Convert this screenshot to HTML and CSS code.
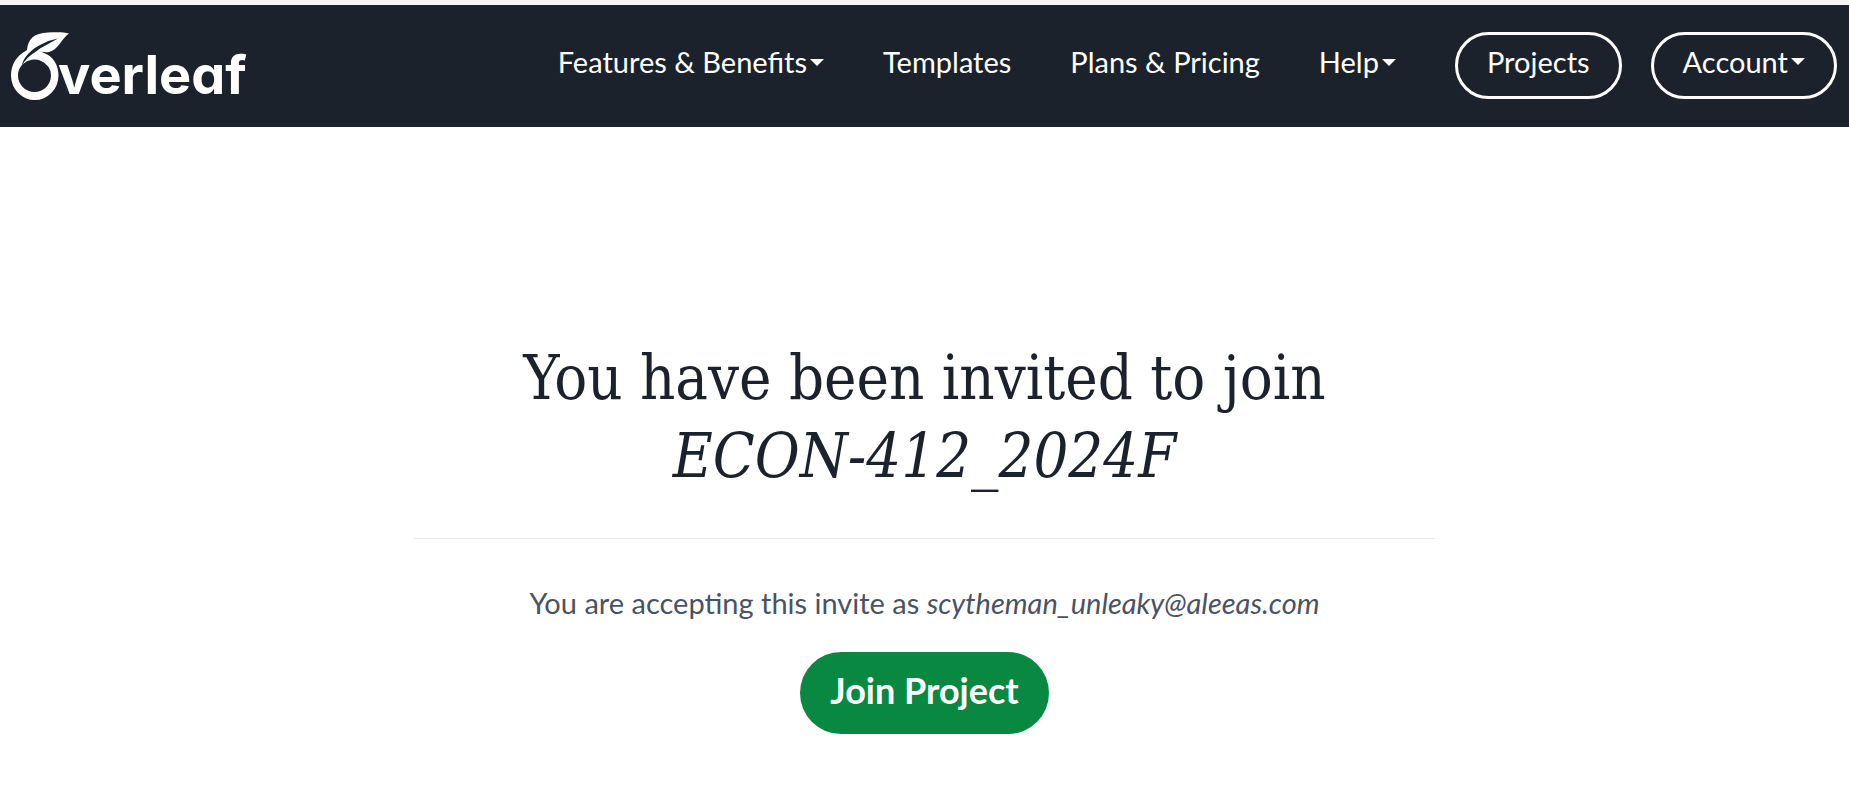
FILE: index.html
```html
<!DOCTYPE html>
<html lang="en">
<head>
<meta charset="utf-8">
<meta name="viewport" content="width=device-width, initial-scale=1">
<title>Project Invite - Overleaf</title>
<link rel="stylesheet" href="styles.css">
</head>
<body>
<header class="navbar">
  <a class="brand" href="#" aria-label="Overleaf">
    <svg class="brand-mark" viewBox="0 0 60 70" aria-hidden="true">
      <path fill="#fff" fill-rule="evenodd" d="M17 18C18 7 24 1 38 .5C47 0 54 0 59 1.500C52 6 48 18 39 20Q34 21 27 18.500Q32 19.500 34 21C43 24 48.500 33 48.500 43.500A23.700 24.500 0 0 1 1 43.500C1 33 6 24 17 18ZM13 32C9 36 8 40 8 43.500A16.500 16.500 0 0 0 41 43.500A16.500 15.500 0 0 0 13 32Z"/>
      <path fill="#1b222c" d="M11.500 34C14 24 22 17 31 12.500Q39 8 48 6.500Q38 12 30 16.500L26 19.500C20 23 15 28 11.500 34Z"/>
    </svg>
    <span class="brand-name">verleaf</span>
  </a>
  <nav class="menu" aria-label="Primary">
    <button class="menu-item" type="button">Features &amp; Benefits<span class="caret"></span></button>
    <a class="menu-item" href="#">Templates</a>
    <a class="menu-item" href="#">Plans &amp; Pricing</a>
    <button class="menu-item" type="button">Help<span class="caret"></span></button>
    <div class="pills">
      <a class="menu-item pill" href="#">Projects</a>
      <button class="menu-item pill" type="button">Account<span class="caret"></span></button>
    </div>
  </nav>
</header>
<main class="invite">
  <h1 class="title">You have been invited to join<br><em>ECON-412_2024F</em></h1>
  <hr class="divider">
  <p class="note">You are accepting this invite as <em>scytheman_unleaky@aleeas.com</em></p>
  <button class="join" type="submit">Join Project</button>
</main>
</body>
</html>
```
FILE: styles.css
```css
* { box-sizing: border-box; }

body {
  margin: 0;
  background: #fff;
  color: #495365;
  font: 29px/42px Lato, sans-serif;
}

.navbar {
  display: flex;
  justify-content: space-between;
  align-items: flex-start;
  border-top: 5px solid #f4f5f5;
  background: #1b222c;
  padding: 27px 12px 28px 10px;
}

.brand {
  display: flex;
  height: 67px;
  color: #fff;
  text-decoration: none;
}

.brand-mark {
  flex: none;
  width: 60px;
  height: 70px;
  margin-right: -12px;
}

.brand-name {
  font: 700 54px/85px Inter, sans-serif;
  font-feature-settings: "cv11";
}

.menu {
  display: flex;
  gap: 59px;
}

.menu-item {
  display: flex;
  align-items: center;
  height: 60px;
  border: 0;
  padding: 0;
  background: none;
  color: #fff;
  font: 29px/42px Lato, sans-serif;
  text-decoration: none;
  white-space: nowrap;
}

.caret {
  margin-left: 3px;
  border: 7px solid transparent;
  border-top-color: #fff;
  border-bottom: 0;
}

.pills {
  display: flex;
  gap: 29px;
}

.pill {
  height: 67px;
  border: 3px solid #fff;
  border-radius: 34px;
  padding: 0 29px 8px;
}

.invite {
  width: 56%;
  max-width: 1021px;
  margin: 0 auto;
  padding-top: 212px;
  text-align: center;
}

.title {
  margin: 0;
  color: #1b222c;
  font: 400 61px/78px "DejaVu Serif Condensed", "DejaVu Serif", serif;
  white-space: nowrap;
}

.divider {
  margin: 43px 0;
  border: 0;
  border-top: 1px solid #e7e9ee;
}

.note {
  margin: 0 0 28px;
}

.join {
  border: 0;
  border-radius: 41px;
  padding: 14px 30px 20px;
  background: #098842;
  color: #fff;
  font: 700 36px/48px Lato, sans-serif;
}
```
